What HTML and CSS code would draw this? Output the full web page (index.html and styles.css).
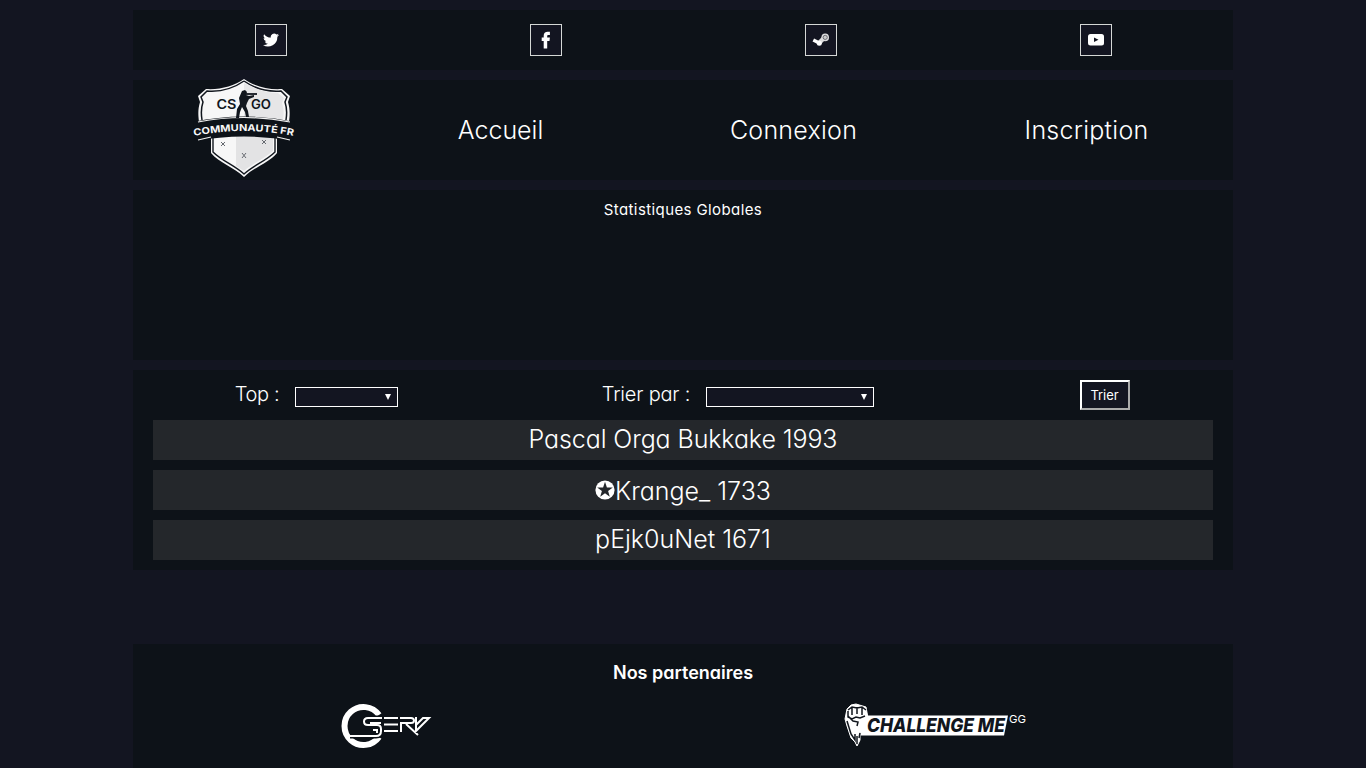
FILE: index.html
```html
<!DOCTYPE html>
<html lang="fr">
<head>
<meta charset="utf-8">
<title>CS:GO Communauté FR</title>
<link rel="stylesheet" href="styles.css">
</head>
<body>
<div class="page">
  <header class="panel social">
    <a class="social-link" aria-label="Twitter"><svg width="16" height="16" viewBox="0 0 24 24"><path fill="#fff" d="M24 4.6a10 10 0 0 1-2.8.8 5 5 0 0 0 2.1-2.7 10 10 0 0 1-3.1 1.2 4.9 4.9 0 0 0-8.4 4.5A14 14 0 0 1 1.700 3.200a4.900 4.900 0 0 0 1.500 6.500 5 5 0 0 1-2.200-.6 4.900 4.900 0 0 0 3.900 4.900 5 5 0 0 1-2.200.1 4.900 4.900 0 0 0 4.600 3.400A9.900 9.900 0 0 1 0 19.500a14 14 0 0 0 21.500-12.400A10 10 0 0 0 24 4.600z"/></svg></a>
    <a class="social-link" aria-label="Facebook"><svg width="16" height="18" viewBox="0 0 16 18"><path fill="#fff" d="M5.700 17.500V10H3.700V6.500h2V4.700C5.700 2.100 7.200.7 9.700.7c1 0 1.900.1 2.200.1v3.300h-1.500c-1.100 0-1.200.6-1.200 1.200v1.200h2.700l-.4 3.500H9.200v7.500z"/></svg></a>
    <a class="social-link" aria-label="Steam"><svg width="18" height="16" viewBox="0 0 18 16"><path d="m1.300 8 6 3" stroke="#fff" stroke-width="3.400"/><path d="m7 11 5.500-5.500" stroke="#ddd" stroke-width="4.400"/><circle cx="13.200" cy="5.400" r="3.800" fill="#dcdcde"/><circle cx="13.200" cy="5.400" r="2.100" fill="#ccc" stroke="#55565e" stroke-width=".8"/><circle cx="7.300" cy="11.200" r="2.500" fill="#fff"/></svg></a>
    <a class="social-link" aria-label="YouTube"><svg width="16" height="12" viewBox="0 0 16 12"><rect width="16" height="11.500" rx="2.500" fill="#fff"/><path d="M6 3.500 10.500 5.800 6 8z" fill="#131521"/></svg></a>
  </header>

  <nav class="panel nav">
    <a class="brand" aria-label="CS:GO Communauté FR">
      <svg width="104" height="100" viewBox="0 0 104 100">
        <path d="M52 0C42 7 28 11 14 10L6 17l2 6c-2 7-2 12-1 20l12-1c22-3 44-3 66 0l12 1c1-8 1-13-1-20l2-6-8-7C76 11 62 7 52 0z" fill="#f7f7f7"/>
        <path d="M52 2C42 9 28 13 15 12L9 18l2 5c-2 6-2 12-1 18M52 2c10 7 24 11 37 10l6 6-2 5c2 6 2 12 1 18" fill="none" stroke="#11161d" stroke-width="1.500"/>
        <path d="M52 4c10 6 23 10 34 10l6 5-2 5c2 6 2 10 1 17-14-2-27-3-39-3z" fill="#e6e6e7"/>
        <path d="M19 58c22-3 44-3 66 0v16c-8 10-23 14-33 24C42 88 27 84 19 74z" fill="#f7f7f7"/>
        <path d="M21 58v15c9 9 21 13 31 22 10-9 22-13 31-22V58" fill="none" stroke="#11161d" stroke-width="1.400"/>
        <path d="M44 57q20-1 37 2v13c-9 8-20 12-29 20l-8-5z" fill="#e3e3e4"/>
        <path d="M1 43q51-11 102 0l-2 19q-49-9-98 0z" fill="#0d1218"/>
        <path d="M6 43q46-9 92 0M6 61l13-3M85 58l13 3" fill="none" stroke="#f3f3f3" stroke-width="1.200"/>
        <path d="m50 12 3-1 2 2-1 3 3 1 5-1v2l-5 2-2 4-1 3 2 5 1 6h-3l-1-5-3-5-2 5-1 6h-3l1-9 3-5-1-6z" fill="#11161d"/><path d="M54 15h11" stroke="#11161d" stroke-width="1.800"/>
        <text x="24.500" y="30" class="crest-title" textLength="20" lengthAdjust="spacingAndGlyphs">CS</text>
        <text x="59" y="30" class="crest-title" textLength="20" lengthAdjust="spacingAndGlyphs">GO</text>
        <path id="band" d="M2 57Q52 47 102 57" fill="none"/>
        <text class="crest-band"><textPath href="#band" textLength="100" lengthAdjust="spacingAndGlyphs">COMMUNAUTÉ FR</textPath></text>
        <path d="m29 63 4 4m0-4-4 4m21 7 4 5m0-5-4 5m20-18 4 4m0-4-4 4" stroke="#666a70" stroke-width="1"/>
      </svg>
    </a>
    <a class="nav-link accueil">Accueil</a>
    <a class="nav-link connexion">Connexion</a>
    <a class="nav-link inscription">Inscription</a>
  </nav>

  <section class="panel stats"><h2 class="stats-title">Statistiques Globales</h2></section>

  <section class="panel ranking">
    <form class="filters">
      <div class="filter"><span class="filter-label top-label">Top :</span><span class="select select-top"><i class="arrow"></i></span></div>
      <div class="filter"><span class="filter-label sort-label">Trier par :</span><span class="select select-sort"><i class="arrow"></i></span></div>
      <div class="filter"><button class="submit" type="button">Trier</button></div>
    </form>
    <div class="row"><span class="player first">Pascal Orga Bukkake 1993</span></div>
    <div class="row shifted"><svg class="star" width="20" height="20" viewBox="0 0 20 20"><circle cx="10" cy="10" r="9.600" fill="#fff"/><path fill="#24272b" d="m10 1.800 1.900 5.600h5.900l-4.700 3.600 1.700 5.800-4.800-3.500-4.800 3.500L6.900 11 2.200 7.400h5.900z"/></svg><span class="player second">Krange_ 1733</span></div>
    <div class="row"><span class="player third">pEjk0uNet 1671</span></div>
  </section>

  <footer class="panel partners">
    <h2 class="partners-title">Nos partenaires</h2>
    <div class="partner-list">
      <a class="partner" aria-label="OServ">
        <svg width="94" height="46" viewBox="2 0 94 46">
          <path d="M42 12A19 19 0 1 0 42 34" fill="none" stroke="#fff" stroke-width="6"/>
          <path d="M45 15H31q-4 0-4 3.500t4 3.500h9q4 0 4 4v2q0 5-5 5H13" fill="none" stroke="#0d1218" stroke-width="5"/>
          <path d="M45 15H31q-4 0-4 3.500t4 3.500h9q4 0 4 4v2q0 5-5 5H13M44 20H33M36 27h4v3" fill="none" stroke="#fff" stroke-width="2"/>
          <path d="M47 15h14M47 21.500h14M47 28h14M64 29V20h10q3 0 3-2.500t-3-2.500H63M69 21l12 11M79 14v14l13-13h-6l-7 7" fill="none" stroke="#fff" stroke-width="2"/>
        </svg>
      </a>
      <a class="partner" aria-label="Challenge Me GG">
        <svg width="184" height="46" viewBox="0 0 184 46">
          <path d="M22 12.500h142l-4 20H16z" fill="#fff"/>
          <path d="m3 6 4-4 5-1 10 3 2 11-3 12-5 3v7l-3 6-2-4-4-4-4-12L1 16z" fill="#fff" stroke="#fff" stroke-linejoin="round"/>
          <path d="M4 8v6l4 2 4-2 4 1 5-2M8 5v7M13 4v7M18 5v7M4 13l5 5 5 1-1 4M3 18l4 13 4 6v-6M13 41v-8M15 35l1-5M4 7l4-3 5 1 5-1 4 3" fill="none" stroke="#11161d" stroke-width="1.500"/>
          <text x="23" y="29" class="challenge" textLength="138" lengthAdjust="spacingAndGlyphs">CHALLENGE ME</text>
          <text x="165" y="20" class="gg" textLength="17" lengthAdjust="spacingAndGlyphs">GG</text>
        </svg>
      </a>
    </div>
  </footer>
</div>
</body>
</html>
```
FILE: styles.css
```css
* { box-sizing: border-box; }
html, body { height: 100%; }
body {
  margin: 0;
  overflow: hidden;
  background: #131521;
  color: #fff;
  font-family: Inter, Lato, sans-serif;
  font-weight: 300;
  font-feature-settings: "cv11";
}
.page { width: 1100px; margin: 0 auto; padding-top: 10px; }
.panel { background: #0d1218; margin-bottom: 10px; }

.social { display: grid; grid-template-columns: repeat(4, 1fr); height: 60px; align-items: center; justify-items: center; }
.social-link { width: 32px; height: 32px; border: 1px solid #d5d8d6; background: #131521; display: flex; align-items: center; justify-content: center; }

.nav { display: grid; grid-template-columns: 221px repeat(3, 1fr); height: 100px; align-items: center; justify-items: center; }
.brand { height: 100px; display: flex; margin-top: -2px; }
.nav-link { font-size: 25px; line-height: 30px; padding-bottom: 1px; }
.connexion { letter-spacing: .25px; }
.inscription { letter-spacing: .25px; }
.crest-title { font: 600 12.500px Inter, sans-serif; fill: #11161d; }
.crest-band { font: 700 9.500px Inter, sans-serif; fill: #f7f7f7; }

.stats { height: 170px; padding-top: 10px; text-align: center; }
.stats-title { margin: 0; font-size: 15px; line-height: 20px; font-weight: 400; letter-spacing: .4px; }

.ranking { height: 200px; padding: 10px 20px; }
.filters { display: grid; grid-template-columns: 327px 1fr 217px; height: 40px; }
.filter { display: flex; justify-content: center; align-items: flex-start; }
.filter-label { font-size: 20px; line-height: 29px; margin-right: 16px; white-space: nowrap; }
.top-label { letter-spacing: -.4px; }
.sort-label { letter-spacing: -.2px; }
.select { height: 20px; margin-top: 7px; border: 1px solid #fff; background: #131521; display: flex; align-items: center; justify-content: flex-end; padding-right: 6px; }
.select-top { width: 103px; }
.select-sort { width: 168px; }
.arrow { border: 3px solid transparent; border-top: 6px solid #fff; border-bottom: 0; }
.submit { width: 50px; height: 30px; padding: 0; border: 2px outset #fff; background: #131521; color: #fff; font: 400 13px Inter, sans-serif; letter-spacing: -.1px; }
.row { height: 40px; margin-bottom: 10px; background: #24272b; display: flex; justify-content: center; align-items: center; padding-bottom: 3px; }
.row.shifted { padding: 1px 0 0; }
.star { margin-top: -1px; }
.player { font-size: 25px; line-height: 30px; white-space: pre; }
.first { letter-spacing: -.1px; }

.partners { height: 140px; margin-top: 74px; padding-top: 17px; }
.partners-title { margin: 0; text-align: center; font-size: 18px; line-height: 24px; font-weight: 600; }
.partner-list { display: grid; grid-template-columns: 506px 594px; padding-top: 18px; }
.partner { display: flex; justify-content: center; }
.challenge { font: italic 800 19px Inter, sans-serif; fill: #11161d; }
.gg { font: 400 11px Inter, sans-serif; fill: #fff; }
```
